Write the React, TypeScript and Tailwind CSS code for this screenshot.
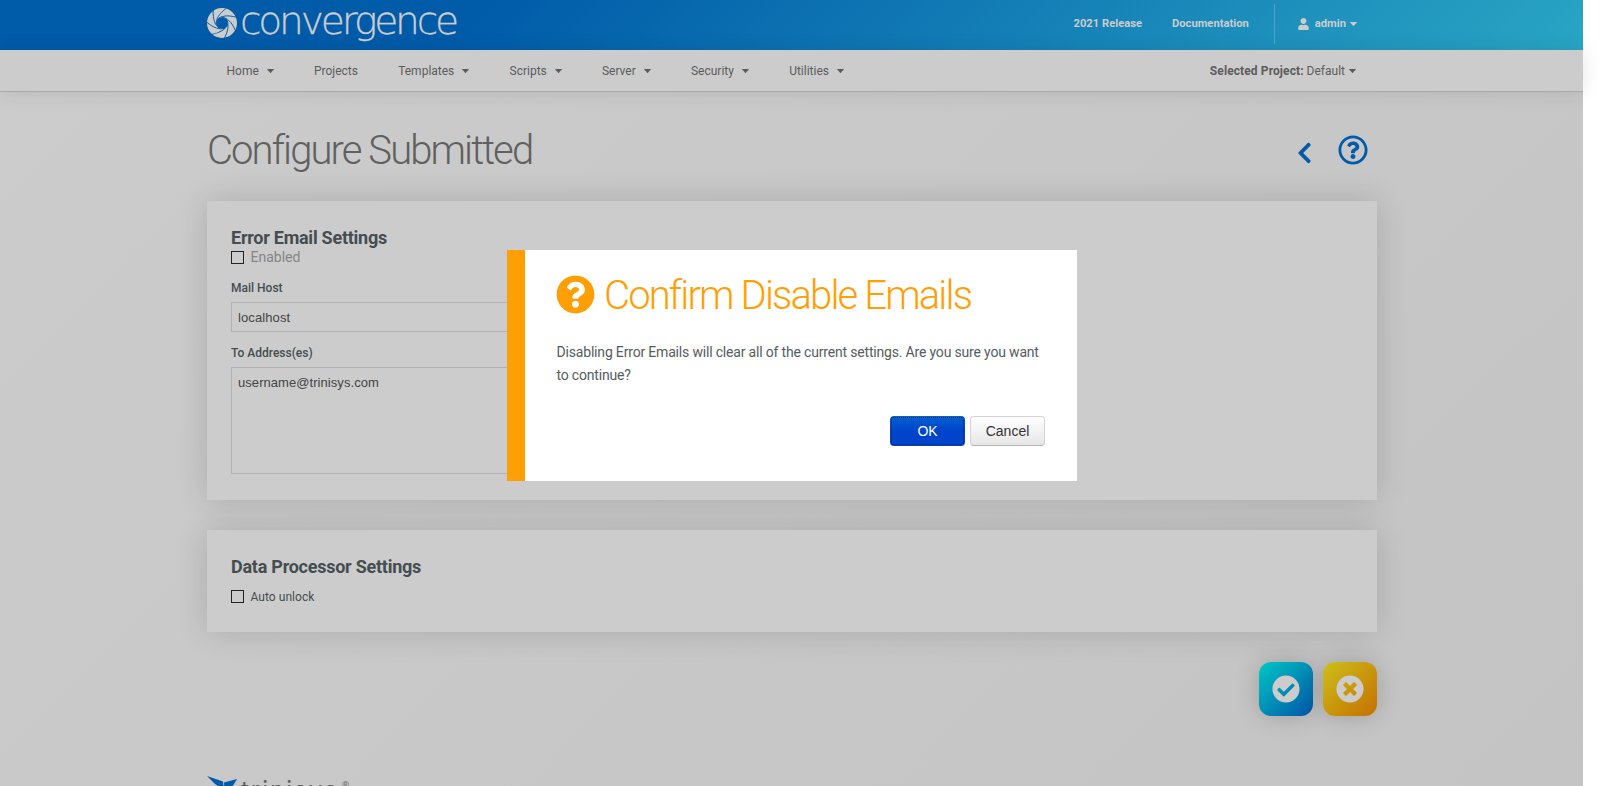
import React from "react";
import {
  FaCheckCircle,
  FaChevronLeft,
  FaQuestionCircle,
  FaRegQuestionCircle,
  FaTimesCircle,
  FaUser,
} from "react-icons/fa";

const navItems = [
  { label: "Home", menu: true },
  { label: "Projects", menu: false },
  { label: "Templates", menu: true },
  { label: "Scripts", menu: true },
  { label: "Server", menu: true },
  { label: "Security", menu: true },
  { label: "Utilities", menu: true },
];

const blades = [0, 51.4, 102.9, 154.3, 205.7, 257.1, 308.6];

function Caret() {
  return (
    <svg className="h-1 w-[7px] shrink-0" viewBox="0 0 7 4" fill="currentColor">
      <path d="M.4 0h6.2q.6.1.2.6L3.9 3.7q-.4.4-.8 0L.2.6Q-.2.1.4 0z" />
    </svg>
  );
}

function Logo() {
  return (
    <svg className="block h-[50px] w-[254px]" viewBox="0 0 254 50">
      <g transform="translate(15 23)">
        <circle r="10.4" fill="none" stroke="#cccccc" strokeWidth="9.2" />
        {blades.map((a) => (
          <path
            key={a}
            transform={`rotate(${a})`}
            d="M-5.8 1.6C-6 -4 -3.4 -9 4.6 -15"
            fill="none"
            stroke="#005ba9"
            strokeWidth="0.9"
          />
        ))}
      </g>
      <text
        x="33"
        y="34"
        textLength="216"
        lengthAdjust="spacingAndGlyphs"
        fill="#cccccc"
        stroke="#cccccc"
        strokeWidth="0.3"
        className="font-['DejaVu_Sans',sans-serif] text-[37px] font-extralight tracking-[-3px]"
      >
        convergence
      </text>
    </svg>
  );
}

function Header() {
  return (
    <header className="h-[50px] bg-[linear-gradient(135deg,#005ba9_0%,#005ba9_30%,#29a5c4_100%)] text-[#cccccc]">
      <div className="ml-[207px] flex h-full w-[1170px] items-start justify-between">
        <Logo />
        <div className="flex h-12 items-center text-[11.2px] font-bold">
          <span>2021 Release</span>
          <span className="ml-[30px]">Documentation</span>
          <span className="ml-[25px] h-10 w-px bg-[#4aa3c8]" />
          <FaUser className="ml-[23px] h-3 w-[11px]" />
          <span className="ml-1.5 mr-1">admin</span>
          <Caret />
          <span className="w-5" />
        </div>
      </div>
    </header>
  );
}

function Nav() {
  return (
    <nav className="h-[42px] border-b border-[#a9a9a9] bg-[#cccccc] text-xs text-[#5c5c5c] shadow-[0_0_20px_rgba(0,0,0,0.1)]">
      <div className="ml-[207px] flex h-full w-[1170px] items-center">
        <ul className="flex gap-[40.2px] pl-[19.5px]">
          {navItems.map((item) => (
            <li key={item.label} className="flex items-center">
              {item.label}
              {item.menu && (
                <span className="ml-2">
                  <Caret />
                </span>
              )}
            </li>
          ))}
        </ul>
        <div className="ml-auto mr-[21px] flex items-center">
          <span>
            <b className="tracking-[0.1px]">Selected Project:</b> Default
          </span>
          <span className="ml-1">
            <Caret />
          </span>
        </div>
      </div>
    </nav>
  );
}

function Checkbox() {
  return <span className="block size-[13px] shrink-0 border border-[#222222]" />;
}

function Footer() {
  return (
    <footer className="mt-[60px] flex h-10 items-start">
      <svg className="h-6 w-[30px]" viewBox="0 0 30 24">
        <path d="M0 0 16 5.5 17 14 8 8Z" fill="#005ba9" />
        <path d="M17 6.5 30 3 26.5 9 17.5 16Z" fill="#005ba9" />
      </svg>
      <span className="ml-1 w-[101px] font-['Inter',sans-serif] text-[24px] leading-7 tracking-[2px] text-[#606060]">
        trinisys
      </span>
      <span className="mt-[3px] text-[9px] leading-3 text-[#6a6a6a]">®</span>
    </footer>
  );
}

function ConfirmDialog() {
  return (
    <div
      role="dialog"
      className="absolute left-[507px] top-[250px] h-[231px] w-[570px] border-l-[18px] border-[#ff9f06] bg-white pl-[31px] pr-8"
    >
      <h2 className="flex h-[90px] items-center text-[40px] font-light tracking-[-1.85px] text-[#ff9f06]">
        <FaQuestionCircle className="mb-0.5 mr-[9px] size-[39px]" />
        <span className="mt-0.5">Confirm Disable Emails</span>
      </h2>
      <p className="mt-px w-[492px] pl-[0.5px] text-sm leading-[23px] tracking-[-0.18px] text-[#555c60]">
        Disabling Error Emails will clear all of the current settings. Are you sure you want to continue?
      </p>
      <div className="mt-[29px] flex justify-end gap-[5px] font-['Liberation_Sans',sans-serif] text-sm">
        <button className="h-[30px] w-[75px] rounded-[4px] bg-gradient-to-b from-[#0060d0] to-[#0044cc] to-50% p-px text-white">
          <span className="flex h-full items-center justify-center rounded-[2px] border border-dotted border-[#1b2a4a]">
            OK
          </span>
        </button>
        <button className="h-[30px] w-[75px] rounded-[4px] border border-[#d4d4d4] border-b-[#b3b3b3] bg-gradient-to-b from-white to-[#e6e6e6] text-[#333333]">
          Cancel
        </button>
      </div>
    </div>
  );
}

export default function App() {
  return (
    <div className="relative h-[786px] w-[1600px] overflow-hidden bg-white font-['Roboto',sans-serif]">
      <div className="h-full w-[1583px] bg-[linear-gradient(135deg,#cccccc,#c4c4c4)]">
        <Header />
        <Nav />
        <main className="ml-[207px] w-[1170px]">
          <div className="flex h-[109px] items-center justify-between pt-1">
            <h1 className="mt-[5px] text-[40px] font-light tracking-[-1.9px] text-[#606060]">Configure Submitted</h1>
            <div className="flex items-center pr-[9.5px] text-[#005ba9]">
              <FaChevronLeft className="mr-[25px] mt-2 h-6 w-[17px]" />
              <FaRegQuestionCircle className="mt-0.5 size-[30px]" />
            </div>
          </div>

          <section className="h-[299px] bg-[#cccccc] px-6 pt-[25px] text-[#454d51] shadow-[0_0_30px_rgba(0,0,0,0.15)]">
            <h3 className="text-lg font-bold leading-6 tracking-[-0.25px]">Error Email Settings</h3>
            <div className="flex h-[15px] items-center gap-[6.5px] text-sm text-[#858585]">
              <Checkbox />
              <span className="-mt-px">Enabled</span>
            </div>
            <div className="mt-[15px] text-xs font-medium leading-4">Mail Host</div>
            <div className="mt-1.5 flex h-[30px] w-[500px] items-center border border-[#b2b2b2] px-1.5 pt-0.5 font-['Liberation_Sans',sans-serif] text-[13px] tracking-[0.1px] text-[#444444]">
              localhost
            </div>
            <div className="mt-[13px] text-xs font-medium leading-4">To Address(es)</div>
            <div className="mt-1.5 h-[107px] w-[500px] border border-[#b2b2b2] px-1.5 pt-[5px] font-['Liberation_Sans',sans-serif] text-[13px] leading-5 tracking-[0.06px] text-[#444444]">
              username@trinisys.com
            </div>
          </section>

          <section className="mt-[30px] h-[102px] bg-[#cccccc] px-6 pt-[25px] text-[#454d51] shadow-[0_0_30px_rgba(0,0,0,0.15)]">
            <h3 className="text-lg font-bold leading-6 tracking-[-0.25px]">Data Processor Settings</h3>
            <div className="mt-2.5 flex h-[15px] items-center gap-[6.5px] text-xs">
              <Checkbox />
              <span className="tracking-[0.05px]">Auto unlock</span>
            </div>
          </section>

          <div className="mt-[30px] flex justify-end gap-2.5 text-[#cccccc]">
            <button className="flex size-[54px] items-center justify-center rounded-xl bg-[linear-gradient(135deg,#00c8c4,#0054a8)] pb-px pr-px shadow-[0_0_25px_rgba(0,0,0,0.2)]">
              <FaCheckCircle className="size-7" />
            </button>
            <button className="flex size-[54px] items-center justify-center rounded-xl bg-[linear-gradient(135deg,#ccc01a,#c66f00)] pb-px pr-px shadow-[0_0_25px_rgba(0,0,0,0.2)]">
              <FaTimesCircle className="size-7" />
            </button>
          </div>

          <Footer />
        </main>
      </div>
      <ConfirmDialog />
    </div>
  );
}
